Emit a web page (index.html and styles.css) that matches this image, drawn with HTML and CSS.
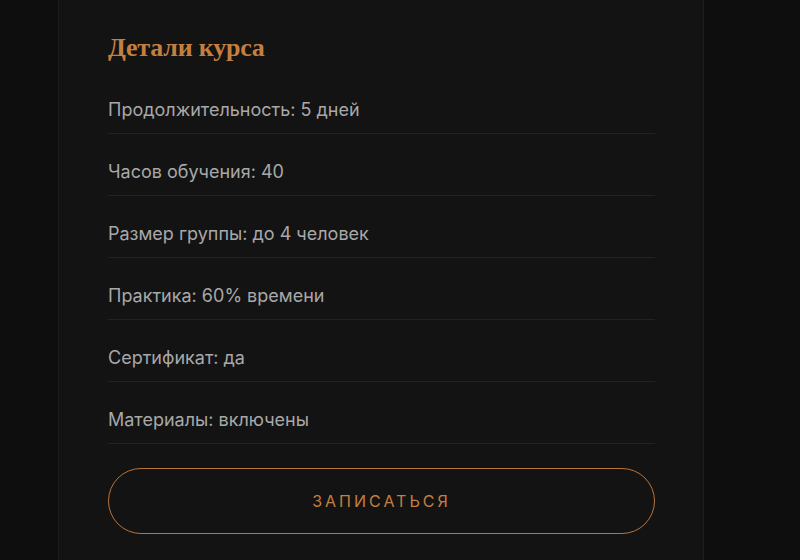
FILE: index.html
```html
<!DOCTYPE html>
<html lang="ru">
<head>
  <meta charset="UTF-8" />
  <meta name="viewport" content="width=device-width, initial-scale=1.0" />
  <title>Детали курса</title>
  <link rel="stylesheet" href="styles.css">
</head>
<body>
  <div class="page">
    <aside class="course-card">
      <h2 class="card-title">Детали курса</h2>
      <ul class="details">
        <li>Продолжительность: 5 дней</li>
        <li>Часов обучения: 40</li>
        <li>Размер группы: до 4 человек</li>
        <li>Практика: 60% времени</li>
        <li>Сертификат: да</li>
        <li>Материалы: включены</li>
      </ul>
      <button class="enroll-btn">Записаться</button>
    </aside>
  </div>
</body>
</html>
```

FILE: styles.css
```css
/* Base */
* {
  margin: 0;
  padding: 0;
  box-sizing: border-box;
}

body {
  background: #0e0e0e;
  color: #a8a8a8;
  font-family: Inter, 'Noto Sans', sans-serif;
  overflow: hidden;
}

.page {
  padding-left: 58px;
}

.course-card {
  width: 646px;
  min-height: 560px;
  background: #131313;
  border-left: 1px solid #1b1b1b;
  border-right: 1px solid #1e1e1e;
  padding: 30px 48px 0 49px;
}

.card-title {
  font-family: 'Liberation Serif', serif;
  font-weight: bold;
  font-size: 26px;
  line-height: 36px;
  letter-spacing: -0.2px;
  color: #c47f3f;
  margin-bottom: 6px;
}

.details {
  list-style: none;
}

.details li {
  font-size: 18px;
  line-height: 28px;
  padding: 24px 0 9px;
  border-bottom: 1px solid #222;
}

.enroll-btn {
  display: block;
  width: 100%;
  height: 66px;
  margin-top: 24px;
  background: transparent;
  border: 1.5px solid #b8743a;
  border-radius: 33px;
  color: #c47f3f;
  font-family: Inter, 'Noto Sans', sans-serif;
  font-size: 16px;
  letter-spacing: 3px;
  text-transform: uppercase;
  cursor: pointer;
}
```
